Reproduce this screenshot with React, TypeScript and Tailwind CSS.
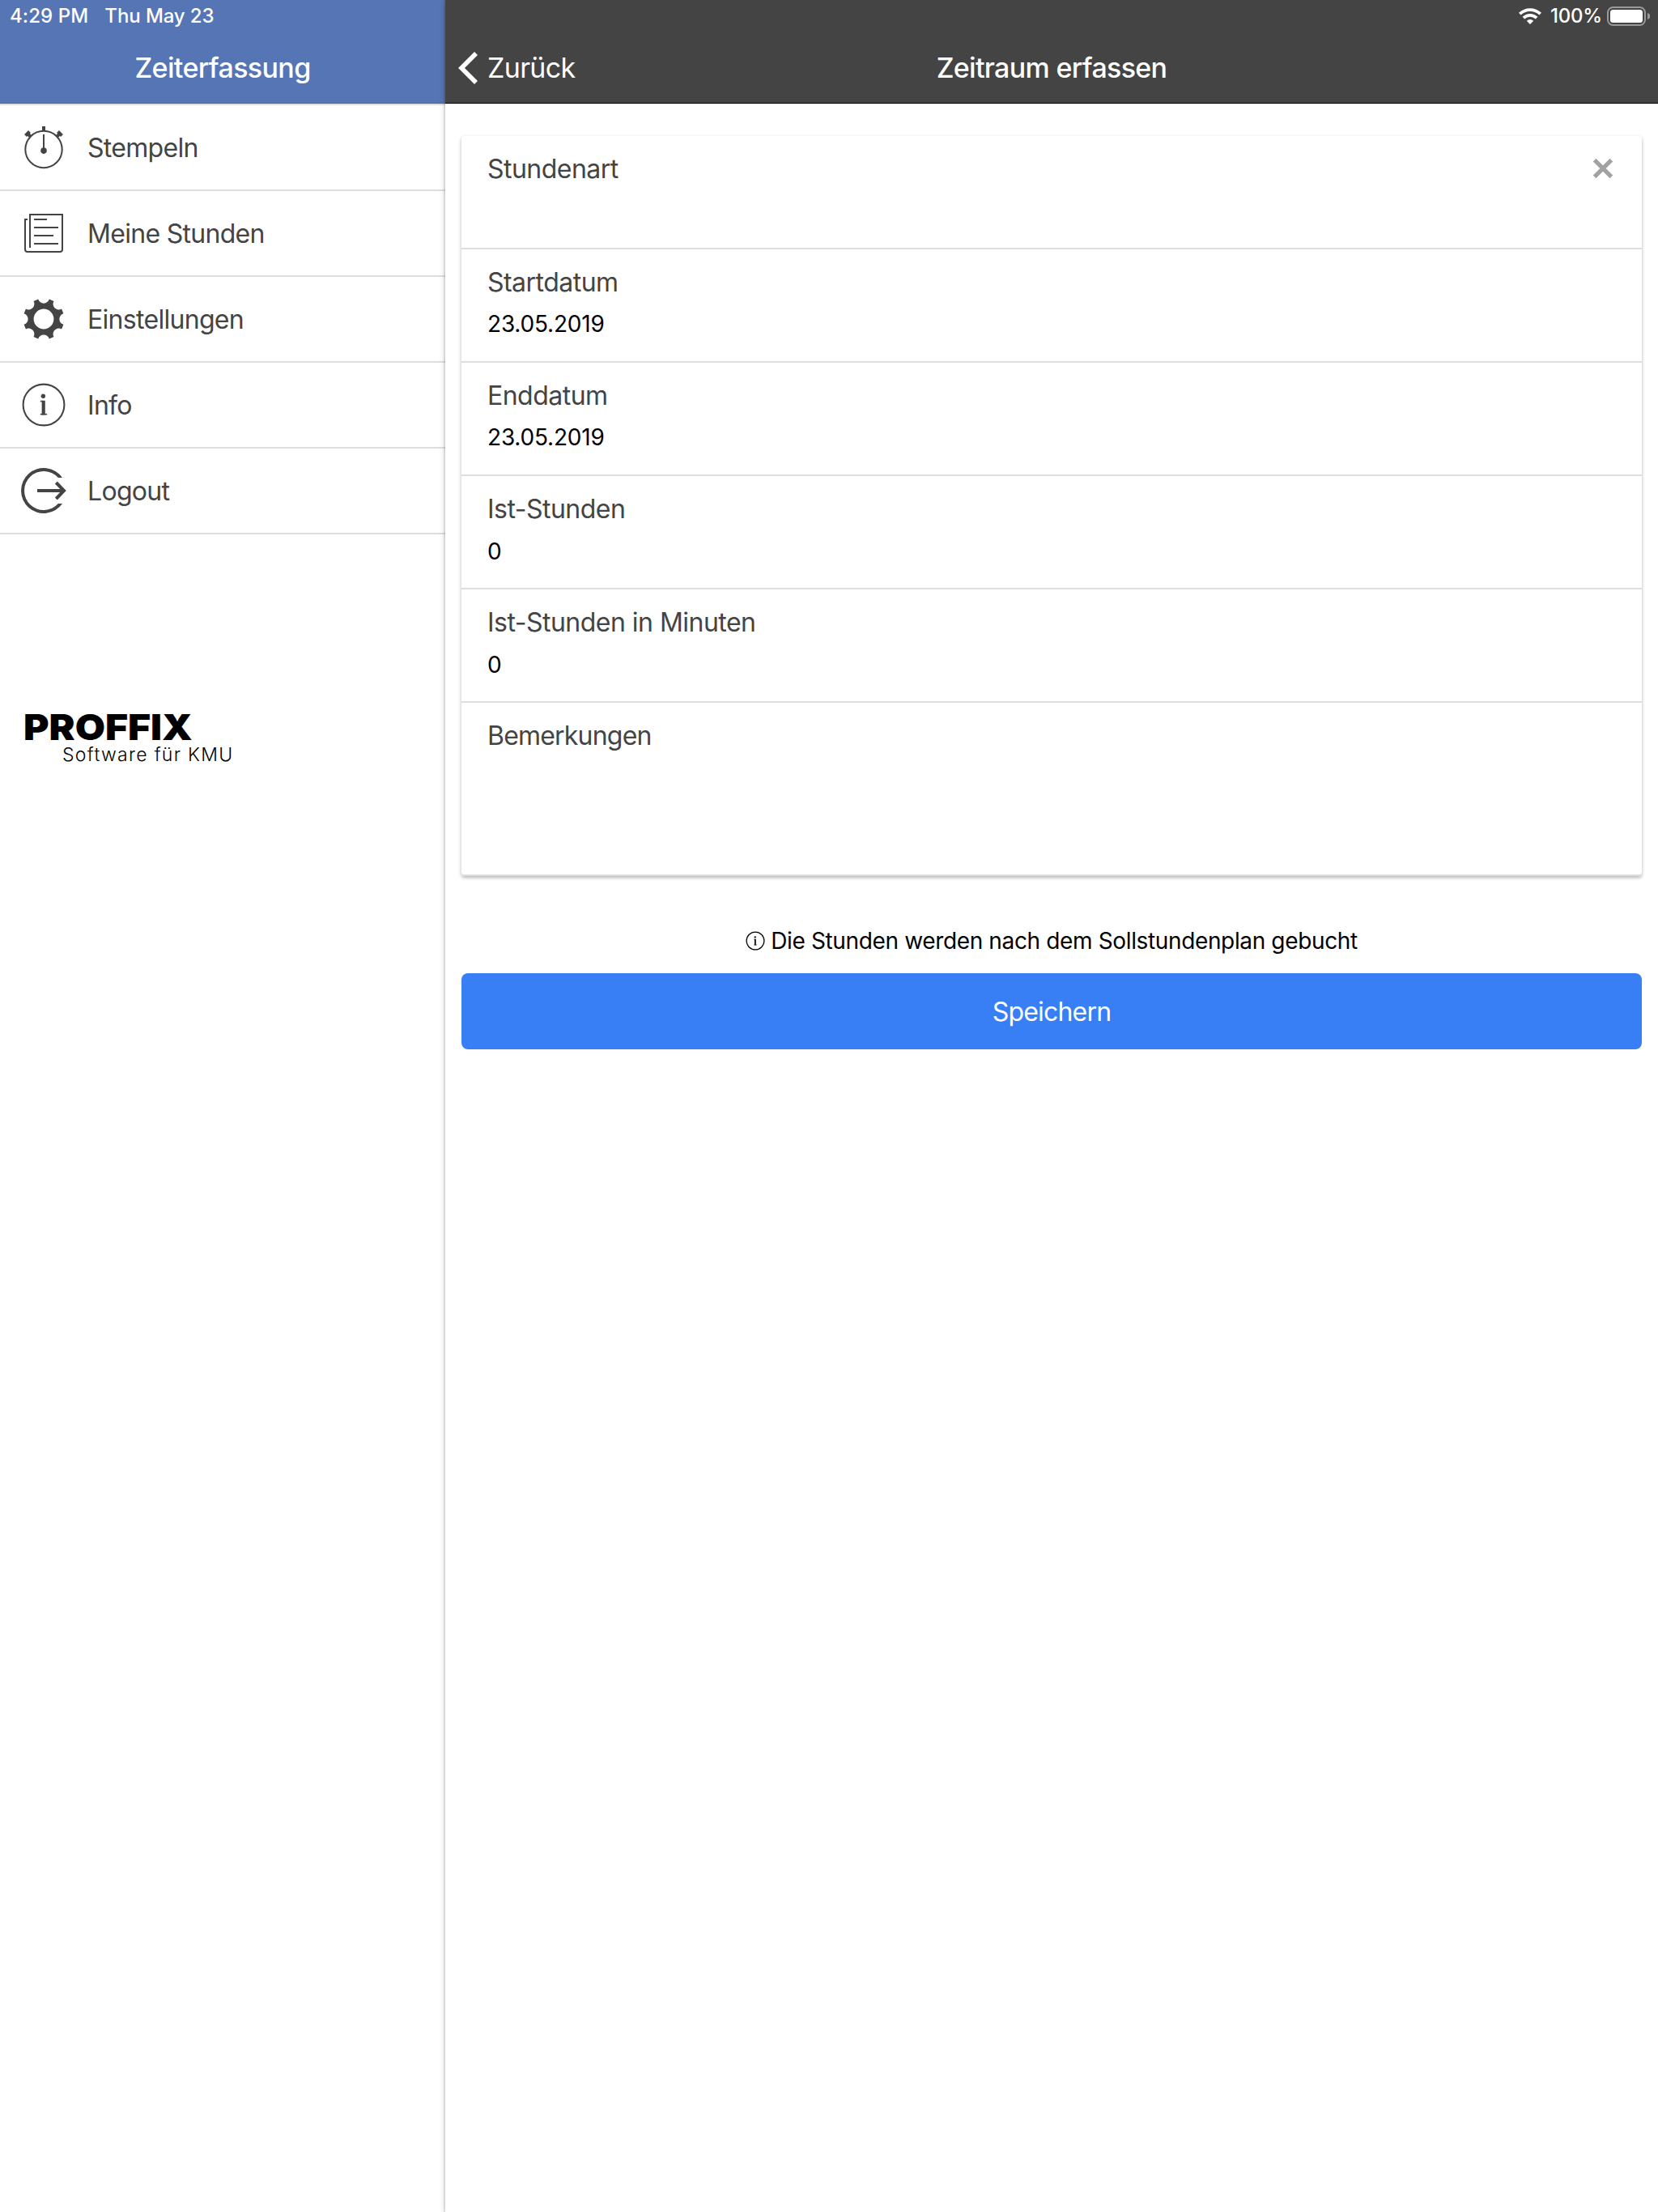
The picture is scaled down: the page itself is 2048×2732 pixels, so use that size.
import type { ReactNode } from "react";

type MenuEntry = { label: string; icon: ReactNode };
type FieldProps = { label: string; value?: string; numeric?: boolean; clearable?: boolean };

const fields: FieldProps[] = [
  { label: "Stundenart", clearable: true },
  { label: "Startdatum", value: "23.05.2019" },
  { label: "Enddatum", value: "23.05.2019" },
  { label: "Ist-Stunden", value: "0", numeric: true },
  { label: "Ist-Stunden in Minuten", value: "0", numeric: true },
];

const menu: MenuEntry[] = [
  { label: "Stempeln", icon: <StopwatchIcon /> },
  { label: "Meine Stunden", icon: <PaperIcon /> },
  { label: "Einstellungen", icon: <GearIcon /> },
  { label: "Info", icon: <InfoIcon className="size-14" stroke={2} /> },
  { label: "Logout", icon: <LogoutIcon /> },
];

export default function App() {
  return (
    <div className="flex h-[2732px] w-[2048px] overflow-hidden bg-white font-[Inter,sans-serif] text-[32px] tracking-[-0.6px] text-[#444]">
      <Sidebar />
      <main className="z-10 flex-1 bg-white shadow-[0_0_8px_rgba(0,0,0,0.2),-2px_0_0_rgba(0,0,0,0.08)]">
        <PageHeader />
        <div className="px-5 pt-10">
          <div className="rounded-[4px] bg-white shadow-[0_2px_4px_rgba(0,0,0,0.3)]">
            {fields.map((field) => (
              <Field key={field.label} {...field} />
            ))}
            <div className="h-[214px] rounded-b-[4px] border-b-2 border-[#dedede] px-8 pt-[21px] leading-10 tracking-[-0.8px]">
              Bemerkungen
            </div>
          </div>
          <p className="mt-[60px] flex items-center justify-center gap-[7px] text-[28px] leading-10 tracking-[-0.36px] text-black">
            <InfoIcon className="size-6" stroke={2.8} />
            Die Stunden werden nach dem Sollstundenplan gebucht
          </p>
          <button className="mt-5 h-[94px] w-full rounded-[8px] bg-[#387ef5] pt-[2px] tracking-[-0.8px] text-white">
            Speichern
          </button>
        </div>
      </main>
    </div>
  );
}

function Sidebar() {
  return (
    <aside className="w-[550px]">
      <header className="h-32 bg-[#5575b5] text-white shadow-[inset_0_-1px_0_#4a67a3]">
        <div className="flex h-10 items-center gap-5 pl-3 text-[24px] font-medium tracking-[-0.1px]">
          <span className="tracking-[0.1px]">4:29 PM</span>
          <span>Thu May 23</span>
        </div>
        <h1 className="text-center text-[34px] leading-[88px] font-medium tracking-[-0.64px]">Zeiterfassung</h1>
      </header>
      <ul className="border-t-2 border-[#dedede] tracking-[-0.7px]">
        {menu.map(({ label, icon }) => (
          <li key={label} className="flex h-[106px] items-center gap-[26px] border-b-2 border-[#dedede] pl-[26px]">
            {icon}
            <span className="pt-[2px]">{label}</span>
          </li>
        ))}
      </ul>
      <div className="mt-[216px] ml-[29px] text-black">
        <div className="w-fit origin-left scale-x-[1.092] text-[44px] leading-[44px] font-black tracking-normal">PROFFIX</div>
        <div className="ml-12 text-[23px] leading-6 font-light tracking-[1.3px]">Software für KMU</div>
      </div>
    </aside>
  );
}

function PageHeader() {
  return (
    <header className="h-32 bg-[#444] text-white shadow-[inset_0_-1px_0_#000]">
      <div className="flex h-10 items-center justify-end pr-[10px] text-[24px] font-medium tracking-[-0.2px]">
        <WifiIcon />
        <span className="ml-[11px]">100%</span>
        <BatteryIcon />
      </div>
      <div className="grid h-[88px] grid-cols-[1fr_auto_1fr] items-center px-4 text-[34px] leading-[88px] tracking-[-0.68px]">
        <button className="flex items-center gap-3">
          <svg className="h-10 w-6" viewBox="0 0 24 40" fill="none" stroke="currentColor" strokeWidth="5.6">
            <path d="M22 2 4 20l18 18" />
          </svg>
          Zurück
        </button>
        <h1 className="font-medium">Zeitraum erfassen</h1>
      </div>
    </header>
  );
}

function Field({ label, value, numeric, clearable }: FieldProps) {
  return (
    <div className="flex h-[140px] items-start justify-between border-b-2 border-[#dedede] pr-9 pl-8">
      <div className="pt-[21px] leading-10">
        <div className="tracking-[-0.52px]">{label}</div>
        {value && (
          <div className={`text-[28px] tracking-[-0.2px] text-black ${numeric ? "mt-3" : "mt-[11px]"}`}>{value}</div>
        )}
      </div>
      {clearable && (
        <svg className="mt-7 size-6" viewBox="0 0 24 24" fill="none" stroke="#a2a2a2" strokeWidth="5.2">
          <path d="M1.600 1.600l20.800 20.800M22.400 1.600 1.600 22.400" />
        </svg>
      )}
    </div>
  );
}

function StopwatchIcon() {
  return (
    <svg className="size-14" viewBox="0 0 56 56" fill="none" stroke="currentColor" strokeWidth="2">
      <circle cx="28" cy="30.5" r="22.7" />
      <path d="M28 12v24" />
      <path d="M28 2v6M12 15l-5-5M44 15l5-5" strokeWidth="4" />
      <path d="M5.5 13.5l5-5M50.5 13.5l-5-5" strokeWidth="4" />
      <circle cx="28" cy="32" r="3.8" fill="currentColor" stroke="none" />
    </svg>
  );
}

function PaperIcon() {
  return (
    <svg className="size-14" viewBox="0 0 56 56" fill="none" stroke="currentColor" strokeWidth="2">
      <path d="M8 11H5v37a3 3 0 0 0 3 3h40a3 3 0 0 0 3-3V5H11v41" />
      <path d="M16 11h16M16 21h30M16 31h24M16 41h30" />
    </svg>
  );
}

// eight identical notches, turned in steps of 45 degrees around the hub
function gearPath() {
  const at = (x: number, y: number, turn: number) => {
    const a = (turn * Math.PI) / 4;
    const px = 28 + x * Math.cos(a) - y * Math.sin(a);
    const py = 28 + x * Math.sin(a) + y * Math.cos(a);
    return `${px.toFixed(2)} ${py.toFixed(2)}`;
  };
  const notches = Array.from({ length: 8 }, (_, i) =>
    `${i === 0 ? "M" : "L"}${at(-6.8, -24.4, i)}C${at(-4.8, -17.7, i)} ${at(4.8, -17.7, i)} ${at(6.8, -24.4, i)}`
  );
  return notches.join("") + "ZM40.4 28a12.4 12.4 0 1 0-24.8 0a12.4 12.4 0 1 0 24.8 0Z";
}

function GearIcon() {
  return (
    <svg className="size-14" viewBox="0 0 56 56" fill="currentColor">
      <path fillRule="evenodd" d={gearPath()} />
    </svg>
  );
}

function InfoIcon({ className, stroke }: { className: string; stroke: number }) {
  return (
    <svg className={className} viewBox="1 1 54 54" fill="currentColor">
      <circle cx="28" cy="28" r="24.5" fill="none" stroke="currentColor" strokeWidth={stroke} />
      <circle cx="27.4" cy="17.6" r="2.6" />
      <rect x="25.7" y="23" width="4" height="17" />
      <rect x="24" y="23" width="4" height="1.5" />
      <rect x="24" y="38.5" width="8" height="1.5" />
    </svg>
  );
}

function LogoutIcon() {
  return (
    <svg className="size-14" viewBox="0 0 56 56" fill="none" stroke="currentColor" strokeWidth="4">
      <path d="M51 12A28 28 0 1 0 51 44H45.9A24 24 0 1 1 45.9 12Z" fill="currentColor" stroke="none" />
      <path d="M20 28h32M43.3 18l9.7 10-9.7 10" />
    </svg>
  );
}

function WifiIcon() {
  return (
    <svg className="h-5 w-7" viewBox="0 0 28 20" fill="none" stroke="currentColor" strokeWidth="3.8">
      <path d="M1.3 7.200a18.4 18.4 0 0 1 25.4 0" />
      <path d="M5.9 12.1a11.6 11.6 0 0 1 16.2 0" />
      <path d="M9.8 15.8a6 6 0 0 1 8.4 0L14 20Z" fill="currentColor" stroke="none" />
    </svg>
  );
}

function BatteryIcon() {
  return (
    <svg className="ml-[6px] h-6 w-[53px]" viewBox="0 0 53 24">
      <rect x="1" y="1" width="46" height="22" rx="6.5" fill="none" stroke="#999" strokeWidth="2" />
      <rect x="4" y="4" width="40" height="16" rx="3.5" fill="#fff" />
      <path d="M50 8c2.6 1 3.4 2.5 3.4 4s-.8 3-3.4 4Z" fill="#999" />
    </svg>
  );
}
